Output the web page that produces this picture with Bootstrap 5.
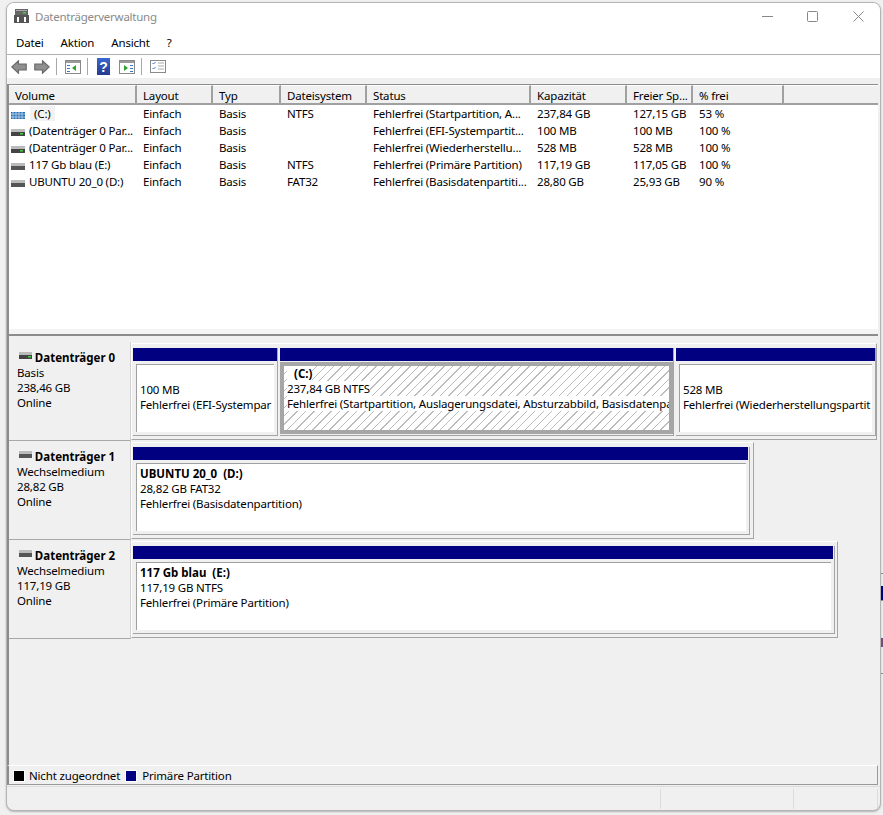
<!DOCTYPE html>
<html lang="de">
<head>
<meta charset="utf-8">
<title>Datenträgerverwaltung</title>
<link href="https://cdn.jsdelivr.net/npm/bootstrap@5.3.0/dist/css/bootstrap.min.css" rel="stylesheet">
<style>
html,body{height:815px;overflow:hidden}
body{background:#f0f0f0;padding:2px 2px 4px 6px;font-family:"Noto Sans","Liberation Sans",sans-serif;font-size:11.5px;line-height:15px;color:#000;letter-spacing:-.17px}
.win{height:809px;background:#f0f0f0;border:1px solid #b4b4b4;border-radius:8px;overflow:hidden;box-shadow:0 1px 2px rgba(0,0,0,.25)}
.titlebar{height:30px;background:#fff;padding:0 0 4px 7px;color:#8a8a8a;letter-spacing:-.25px}
.wintitle{margin-left:6px}
.winbtn{width:45.5px;height:26px}
.winbtns{margin-right:-1px}
.menubar{height:22px;background:#fff;border-bottom:1px solid #b0b0b0;padding:0 0 2px 9px;gap:17px}
.toolbar{height:23px;background:#fff;padding:1px 0 0 4px}
.tsep{width:1px;height:17px;background:#a8a8a8}
.g6{margin-left:6px}.g7{margin-left:7px}.g8{margin-left:8px}.g9{margin-left:9px}
.band{height:6px;background:#f0f0f0}
.listpane{height:246px;margin:0 2px 0 0;background:#fff;border-top:1px solid #8c8c8c;border-left:2px solid #8c8c8c;overflow:hidden}
.voltable{table-layout:fixed;width:100%;margin:0;border-collapse:separate;border-spacing:0}
.voltable th{height:20px;font-weight:400;background:#f0f0f0;border-right:2px solid #a0a0a0;border-bottom:2px solid #a0a0a0;border-top:1px solid #fff;padding:2px 0 0 6px;white-space:nowrap}
.voltable th.restcol{border-right:0}
.voltable td{height:17px;padding:0 0 0 6px;white-space:nowrap;overflow:hidden;border:0;background:#fff}
.c1{width:128px}.c2{width:76px}.c3{width:68px}.c4{width:86px}.c5{width:164px}.c6{width:96px}.c7{width:66px}.c8{width:91px}
.voltable td.namecell{padding-left:2px}
.namecell svg{vertical-align:-1px;margin-right:4px}
.selname{background:#f2f2f2;padding:0 4px;margin-left:1px}
.splitter{height:7px;margin:0 2px 0 0;background:#f4f4f4;border-left:2px solid #8c8c8c;border-bottom:2px solid #8c8c8c}
.graph{height:430px;margin:0 2px 0 0;background:#f0f0f0;border-left:2px solid #8c8c8c;padding-top:6px}
.diskrow{height:99px}
.disklabel{width:122px;padding:8px 0 0 8px;border-right:1px solid #d0d0d0;border-bottom:1px solid #a8a8a8;height:99px;flex:none}
.disklabel svg{margin-left:2px;vertical-align:3px}
b{font-weight:700;letter-spacing:0}
.disktrack{padding:4px 1px 3px 1px;border:1px solid #fff;border-right:1px solid #a4a4a4;border-bottom:1px solid #a4a4a4;gap:2px;height:97px;margin-top:1px}
.t0{width:746px}.t1{width:623px}.t2{width:707px}
.partn{flex:none;height:88px;background:#f0f0f0;border-right:1px solid #a4a4a4;border-bottom:1px solid #a4a4a4}
.p1{width:145px}.p2{width:394px}.p3{width:200px}.p4{width:617px}.p5{width:702px}
.bluebar{height:13px;background:#000080}
.p4 .bluebar,.p5 .bluebar{margin-right:1px}
.pbody{height:68px;margin:3px 3px 0 3px;background:#fff;border-top:1px solid #a0a0a0;border-left:1px solid #a0a0a0;padding:2px 0 0 3px;overflow:hidden;white-space:nowrap}
.pblank{height:15px}
.selframe{height:72px;margin-top:1px;border:4px solid #a6a6a6;padding:0 0 0 3px;overflow:hidden;white-space:nowrap;background:repeating-linear-gradient(135deg,#fff 0 5px,#bcbcbc 5px 6px)}
.selframe span{background:#fff}
.selframe b{margin-left:7px}
.legend{height:20px;margin:0 2px 0 0;border-top:1px solid #fff;border-left:2px solid #8c8c8c;border-bottom:1px solid #999;border-right:1px solid #999;padding:1px 0 0 4px;background:#f0f0f0}
.swatch{width:12px;height:12px;border:1px solid #fff;display:inline-block;margin-right:4px}
.sw-black{background:#000}.sw-blue{background:#000080;margin-right:5px}
.legtxt{margin-right:5px}
.statusbar{height:24px;margin-top:1px;border-top:1px solid #dcdcdc;justify-content:flex-end;padding:2px 2px 0 0}
.stcell{border-left:1px solid #dcdcdc;height:20px}
.s1{width:133px}.s2{width:85px;border-right:1px solid #dcdcdc}
.peek{position:absolute;right:0;width:2px}
.pk1{top:573px;height:1px;background:#888}
.pk2{top:586px;height:14px;background:#000080}
.pk3{top:638px;height:9px;background:#7a4a7a}
.pk4{top:600px;height:1px;background:#888}
.pk5{top:673px;height:1px;background:#888}
</style>
</head>
<body>
<div class="peek pk1"></div><div class="peek pk2"></div><div class="peek pk3"></div><div class="peek pk4"></div><div class="peek pk5"></div>
<div class="win d-flex flex-column">
  <div class="titlebar d-flex align-items-center">
    <svg width="15" height="14" viewBox="0 0 15 14"><rect x="0" y="6" width="15" height="8" fill="#555"/><rect x="1" y="0" width="13" height="6" fill="#666"/><rect x="2" y="1" width="11" height="1" fill="#aaa"/><rect x="9" y="3" width="3" height="1.5" fill="#3dd13d"/><rect x="3" y="8" width="2" height="5" fill="#fff"/><rect x="10" y="8" width="2" height="5" fill="#fff"/></svg>
    <span class="wintitle flex-grow-1">Datenträgerverwaltung</span>
    <div class="winbtns d-flex">
      <div class="winbtn d-flex align-items-center justify-content-center"><svg width="11" height="11" viewBox="0 0 11 11"><path d="M0 5.5h11" stroke="#888" fill="none"/></svg></div>
      <div class="winbtn d-flex align-items-center justify-content-center"><svg width="11" height="11" viewBox="0 0 11 11"><rect x=".5" y=".5" width="10" height="10" rx="1" stroke="#888" fill="none"/></svg></div>
      <div class="winbtn d-flex align-items-center justify-content-center"><svg width="11" height="11" viewBox="0 0 11 11"><path d="M.5.5l10 10M10.5.5l-10 10" stroke="#888" fill="none"/></svg></div>
    </div>
  </div>
  <div class="menubar d-flex align-items-center"><span>Datei</span><span>Aktion</span><span>Ansicht</span><span>?</span></div>
  <div class="toolbar d-flex align-items-center">
    <svg width="16" height="14" viewBox="0 0 16 14"><path d="M.8 7L7.5.8v3.4h7.7v5.6H7.5v3.4z" fill="#8f8f8f" stroke="#6a6a6a" stroke-width="1.2"/></svg>
    <svg class="g7" width="16" height="14" viewBox="0 0 16 14"><path d="M15.2 7L8.5.8v3.4H.8v5.6h7.7v3.4z" fill="#8f8f8f" stroke="#6a6a6a" stroke-width="1.2"/></svg>
    <div class="tsep g6"></div>
    <svg class="g8" width="16" height="14" viewBox="0 0 16 14"><rect x=".5" y=".5" width="15" height="13" fill="#fff" stroke="#8a8a8a"/><rect x="1" y="1" width="14" height="2" fill="#9a9a9a"/><path d="M11 5v6L7 8z" fill="#2ca02c"/><path d="M2 5h3v1H2zM2 8h3v1H2zM2 11h3v1H2z" fill="#3a78c8"/></svg>
    <div class="tsep g6"></div>
    <svg class="g9" width="13" height="17" viewBox="0 0 13 17"><defs><linearGradient id="qg" x1="0" y1="0" x2="0" y2="1"><stop offset="0" stop-color="#3a68d0"/><stop offset="1" stop-color="#23398f"/></linearGradient></defs><rect width="13" height="17" fill="url(#qg)"/><text x="6.5" y="14" font-size="14" font-weight="700" text-anchor="middle" fill="#fff" font-family="Liberation Sans">?</text></svg>
    <svg class="g9" width="16" height="14" viewBox="0 0 16 14"><rect x=".5" y=".5" width="15" height="13" fill="#fff" stroke="#8a8a8a"/><rect x="1" y="1" width="14" height="2" fill="#9a9a9a"/><path d="M5 5v6l4-3z" fill="#2ca02c"/><path d="M11 5h3v1h-3zM11 8h3v1h-3zM11 11h3v1h-3z" fill="#3a78c8"/></svg>
    <div class="tsep g6"></div>
    <svg class="g8" width="16" height="13" viewBox="0 0 16 13"><rect x=".5" y=".5" width="15" height="12" fill="#fff" stroke="#8a8a8a"/><path d="M2.5 3l1 1 2-2M2.5 8l1 1 2-2" stroke="#3a78c8" fill="none"/><path d="M8 3h6M8 6h6M8 9h6" stroke="#aaa"/></svg>
  </div>
  <div class="band"></div>
  <div class="listpane">
    <table class="voltable">
      <colgroup><col class="c1"><col class="c2"><col class="c3"><col class="c4"><col class="c5"><col class="c6"><col class="c7"><col class="c8"><col></colgroup>
      <thead><tr><th>Volume</th><th>Layout</th><th>Typ</th><th>Dateisystem</th><th>Status</th><th>Kapazität</th><th>Freier Sp...</th><th>% frei</th><th class="restcol"></th></tr></thead>
      <tbody>
        <tr><td class="namecell"><svg width="14" height="7" viewBox="0 0 14 7"><rect width="14" height="7" fill="#2a6fb0"/><path d="M0 2h14M0 5h14M2 0v7M5 0v7M8 0v7M11 0v7" stroke="#a8c8e8"/></svg><span class="selname">(C:)</span></td><td>Einfach</td><td>Basis</td><td>NTFS</td><td>Fehlerfrei (Startpartition, A...</td><td>237,84 GB</td><td>127,15 GB</td><td>53 %</td><td></td></tr>
        <tr><td class="namecell"><svg width="14" height="7" viewBox="0 0 14 7"><rect width="14" height="3" fill="#bbb"/><rect y="3" width="14" height="4" fill="#444"/><rect x="9" y="4" width="3" height="1.5" fill="#3dd13d"/></svg>(Datenträger 0 Par...</td><td>Einfach</td><td>Basis</td><td></td><td>Fehlerfrei (EFI-Systempartit...</td><td>100 MB</td><td>100 MB</td><td>100 %</td><td></td></tr>
        <tr><td class="namecell"><svg width="14" height="7" viewBox="0 0 14 7"><rect width="14" height="3" fill="#bbb"/><rect y="3" width="14" height="4" fill="#444"/><rect x="9" y="4" width="3" height="1.5" fill="#3dd13d"/></svg>(Datenträger 0 Par...</td><td>Einfach</td><td>Basis</td><td></td><td>Fehlerfrei (Wiederherstellu...</td><td>528 MB</td><td>528 MB</td><td>100 %</td><td></td></tr>
        <tr><td class="namecell"><svg width="14" height="7" viewBox="0 0 14 7"><rect width="14" height="3" fill="#bbb"/><rect y="3" width="14" height="4" fill="#555"/></svg>117 Gb blau (E:)</td><td>Einfach</td><td>Basis</td><td>NTFS</td><td>Fehlerfrei (Primäre Partition)</td><td>117,19 GB</td><td>117,05 GB</td><td>100 %</td><td></td></tr>
        <tr><td class="namecell"><svg width="14" height="7" viewBox="0 0 14 7"><rect width="14" height="3" fill="#bbb"/><rect y="3" width="14" height="4" fill="#555"/></svg>UBUNTU 20_0 (D:)</td><td>Einfach</td><td>Basis</td><td>FAT32</td><td>Fehlerfrei (Basisdatenpartiti...</td><td>28,80 GB</td><td>25,93 GB</td><td>90 %</td><td></td></tr>
      </tbody>
    </table>
  </div>
  <div class="splitter"></div>
  <div class="graph">
    <div class="diskrow d-flex">
      <div class="disklabel"><svg width="13" height="7" viewBox="0 0 13 7"><rect width="13" height="3" fill="#bbb"/><rect y="3" width="13" height="4" fill="#444"/><rect x="9" y="4" width="3" height="1.5" fill="#3dd13d"/></svg> <b>Datenträger 0</b><br>Basis<br>238,46 GB<br>Online</div>
      <div class="disktrack t0 d-flex">
        <div class="partn p1"><div class="bluebar"></div><div class="pbody"><div class="pblank"></div>100 MB<br>Fehlerfrei (EFI-Systempar</div></div>
        <div class="partn p2"><div class="bluebar"></div><div class="selframe"><span><b>(C:)</b></span><br><span>237,84 GB NTFS</span><br><span>Fehlerfrei (Startpartition, Auslagerungsdatei, Absturzabbild, Basisdatenpa</span></div></div>
        <div class="partn p3"><div class="bluebar"></div><div class="pbody"><div class="pblank"></div>528 MB<br>Fehlerfrei (Wiederherstellungspartit</div></div>
      </div>
    </div>
    <div class="diskrow d-flex">
      <div class="disklabel"><svg width="13" height="7" viewBox="0 0 13 7"><rect width="13" height="3" fill="#bbb"/><rect y="3" width="13" height="4" fill="#555"/></svg> <b>Datenträger 1</b><br>Wechselmedium<br>28,82 GB<br>Online</div>
      <div class="disktrack t1 d-flex">
        <div class="partn p4"><div class="bluebar"></div><div class="pbody"><b>UBUNTU 20_0&nbsp; (D:)</b><br>28,82 GB FAT32<br>Fehlerfrei (Basisdatenpartition)</div></div>
      </div>
    </div>
    <div class="diskrow d-flex">
      <div class="disklabel"><svg width="13" height="7" viewBox="0 0 13 7"><rect width="13" height="3" fill="#bbb"/><rect y="3" width="13" height="4" fill="#555"/></svg> <b>Datenträger 2</b><br>Wechselmedium<br>117,19 GB<br>Online</div>
      <div class="disktrack t2 d-flex">
        <div class="partn p5"><div class="bluebar"></div><div class="pbody"><b>117 Gb blau&nbsp; (E:)</b><br>117,19 GB NTFS<br>Fehlerfrei (Primäre Partition)</div></div>
      </div>
    </div>
  </div>
  <div class="legend d-flex align-items-center"><span class="swatch sw-black"></span><span class="legtxt">Nicht zugeordnet</span><span class="swatch sw-blue"></span><span>Primäre Partition</span></div>
  <div class="statusbar d-flex"><div class="stcell s1"></div><div class="stcell s2"></div></div>
</div>
<script src="https://cdn.jsdelivr.net/npm/bootstrap@5.3.0/dist/js/bootstrap.bundle.min.js"></script>
</body>
</html>
